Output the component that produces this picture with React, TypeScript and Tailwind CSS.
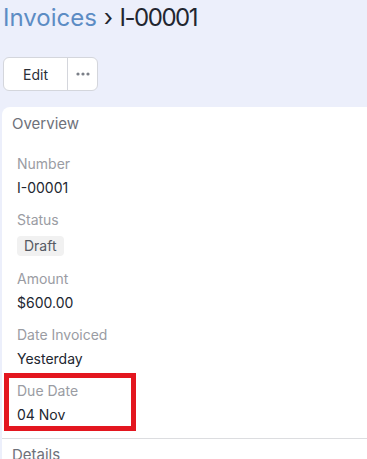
import React from "react";

interface Field {
  label: string;
  value: string;
  badge?: boolean;
  marked?: boolean;
}

const fields: Field[] = [
  { label: "Number", value: "I-00001" },
  { label: "Status", value: "Draft", badge: true },
  { label: "Amount", value: "$600.00" },
  { label: "Date Invoiced", value: "Yesterday" },
  { label: "Due Date", value: "04 Nov", marked: true },
];

const FieldRow: React.FC<{ field: Field }> = ({ field }) => (
  <div className="relative pl-[15px] pt-[6px] pb-[6px]">
    <div className="text-[14px] leading-[20px] text-[#9a9ca3]">{field.label}</div>
    {field.badge ? (
      <span className="mt-[6px] inline-block rounded-[4px] bg-[#f1f1f1] px-[7px] text-[14px] leading-[20px] text-[#555a63]">
        {field.value}
      </span>
    ) : (
      <div className="mt-[4px] text-[14px] leading-[20px] text-[#222630]">{field.value}</div>
    )}
    {field.marked && (
      <div className="pointer-events-none absolute left-[2px] top-[-2px] h-[58px] w-[132px] border-[5px] border-[#e3161f]" />
    )}
  </div>
);

const App: React.FC = () => {
  return (
    <div
      className="h-[459px] w-[367px] overflow-hidden bg-[#eceffb]"
      style={{ fontFamily: "Inter, 'Noto Sans', sans-serif" }}
    >
      <h1 className="pl-[3px] pt-[3px] text-[24px] leading-[30px]">
        <span className="text-[#5c8cc4]">Invoices</span>
        <span className="text-[#222630]"> › </span>
        <span className="tracking-[-1.5px] text-[#222630]">I-00001</span>
      </h1>

      <div className="ml-[3px] mt-[24px] flex h-[34px] w-[95px] rounded-[6px] border border-[#d4d6dc] bg-white">
        <button className="flex w-[63px] items-center justify-center text-[14px] text-[#2b2f38]">
          Edit
        </button>
        <button className="flex flex-1 items-center justify-center border-l border-[#d4d6dc]">
          <svg width="14" height="4" viewBox="0 0 14 4" fill="#7b7f88">
            <circle cx="2" cy="2" r="1.6" />
            <circle cx="7" cy="2" r="1.6" />
            <circle cx="12" cy="2" r="1.6" />
          </svg>
        </button>
      </div>

      <div className="ml-[2px] mt-[16px] w-[420px] rounded-tl-[8px] bg-white">
        <div className="px-[10px] pt-[5px] pb-[12px] text-[15px] leading-[24px] text-[#6e717a]">
          Overview
        </div>
        <div className="pb-[7px]">
          {fields.map((f) => (
            <FieldRow key={f.label} field={f} />
          ))}
        </div>
        <div className="border-t border-[#dcdde0] px-[10px] pt-[4px] text-[15px] leading-[24px] text-[#6e717a]">
          Details
        </div>
      </div>
    </div>
  );
};

export default App;
